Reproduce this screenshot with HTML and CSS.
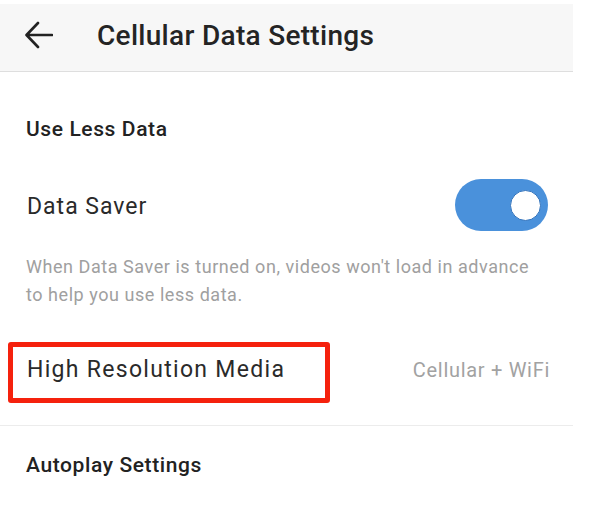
FILE: index.html
```html
<!DOCTYPE html>
<html>
<head>
    <title>Cellular Data Settings</title>
    <link rel="stylesheet" href="styles.css">
</head>
<body>
    <div class="screen">
        <div class="topbar">
            <svg class="back-icon" width="28" height="28" viewBox="0 0 28 28">
                <path d="M2 14H27 M13 2L1.5 14L13 26" fill="none" stroke="#222" stroke-width="2.6" stroke-linecap="round" stroke-linejoin="round"/>
            </svg>
            <h1 class="topbar-title">Cellular Data Settings</h1>
        </div>

        <div class="section-title">Use Less Data</div>

        <div class="setting-row toggle-row">
            <span class="setting-label">Data Saver</span>
            <span class="switch on"><span class="knob"></span></span>
        </div>
        <p class="setting-hint">When Data Saver is turned on, videos won't load in advance to help you use less data.</p>

        <div class="setting-row pref-row">
            <div class="highlight">
                <span class="setting-label">High Resolution Media</span>
            </div>
            <span class="setting-value">Cellular + WiFi</span>
        </div>

        <div class="divider"></div>

        <div class="section-title autoplay">Autoplay Settings</div>
    </div>
</body>
</html>
```

FILE: styles.css
```css
body {
    margin: 0;
    background: #fff;
    font-family: Roboto, "Liberation Sans", sans-serif;
    color: #262626;
}
.screen {
    width: 573px;
}

/* Top bar */
.topbar {
    margin-top: 4px;
    height: 62px;
    padding-bottom: 5px;
    display: flex;
    align-items: center;
    background: #f7f7f7;
    border-bottom: 1px solid #dedede;
}
.back-icon {
    margin-left: 25px;
}
.topbar-title {
    margin: 0 0 0 44px;
    font-size: 28px;
    font-weight: 500;
    letter-spacing: 0.3px;
    color: #242424;
}

/* Section headers */
.section-title {
    padding: 45px 26px 0;
    font-size: 21px;
    line-height: 24px;
    font-weight: 500;
    letter-spacing: 0.6px;
    color: #222;
}
.section-title.autoplay {
    padding-top: 27px;
}

/* Rows */
.setting-row {
    display: flex;
    align-items: center;
    justify-content: space-between;
}
.setting-label {
    font-size: 23px;
    line-height: 26px;
    letter-spacing: 1px;
    color: #2a2a2a;
}
.toggle-row {
    margin-top: 38px;
    height: 52px;
    padding: 0 25px 0 27px;
}
.toggle-row .setting-label {
    padding-top: 3px;
}
.switch {
    width: 93px;
    height: 52px;
    border-radius: 26px;
    background: #4a91db;
    display: flex;
    align-items: center;
    justify-content: flex-end;
    box-sizing: border-box;
    padding-right: 7px;
}
.knob {
    width: 29px;
    height: 29px;
    border-radius: 50%;
    background: #fff;
    border: 1.5px solid #3575bd;
}
.setting-hint {
    margin: 22px 0 0;
    padding: 0 32px 0 26px;
    font-size: 18px;
    line-height: 28px;
    letter-spacing: 0.55px;
    color: #a0a0a0;
}

/* Highlighted preference */
.pref-row {
    margin-top: 33px;
    padding: 0 23px 0 8px;
}
.highlight {
    width: 322px;
    box-sizing: border-box;
    padding: 10px 0 15px 14px;
    border: 5px solid #f5210d;
    border-radius: 3px;
}
.highlight .setting-label {
    letter-spacing: 1.3px;
}
.setting-value {
    margin-bottom: 5px;
    font-size: 20px;
    line-height: 22px;
    letter-spacing: 0.7px;
    color: #a2a2a2;
}
.divider {
    margin-top: 22px;
    height: 1px;
    background: #ececec;
}
```
